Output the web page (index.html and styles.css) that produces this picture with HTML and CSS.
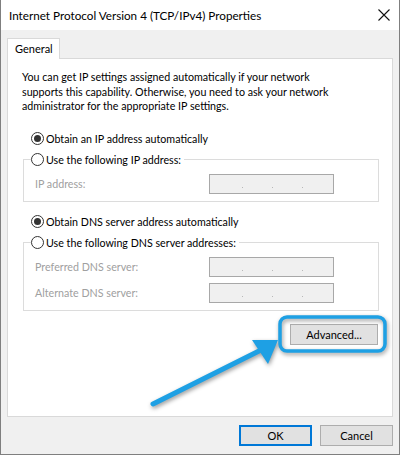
FILE: index.html
```html
<!DOCTYPE html>
<html lang="en">
<head>
  <meta charset="UTF-8">
  <title>Internet Protocol Version 4 (TCP/IPv4) Properties</title>
  <link rel="stylesheet" href="styles.css">
</head>
<body>
  <div class="window">
    <div class="titlebar">
      <span class="title">Internet Protocol Version 4 (TCP/IPv4) Properties</span>
      <svg class="close" width="12" height="12" viewBox="0 0 12 12">
        <path d="M0.5 0.5 L11.5 11.5 M11.5 0.5 L0.5 11.5" stroke="#111" stroke-width="1.1" fill="none"/>
      </svg>
    </div>

    <div class="body">
      <div class="tabs">
        <div class="tab">General</div>
      </div>

      <div class="panel">
        <p class="intro">You can get IP settings assigned automatically if your network<br>supports this capability. Otherwise, you need to ask your network<br>administrator for the appropriate IP settings.</p>

        <div class="radio-row"><span class="radio checked"></span>Obtain an IP address automatically</div>
        <fieldset class="group">
          <legend class="radio-row"><span class="radio"></span>Use the following IP address:</legend>
          <div class="field">
            <span class="field-label">IP address:</span>
            <span class="ipbox"><i></i><i></i><i></i></span>
          </div>
        </fieldset>

        <div class="radio-row dns"><span class="radio checked"></span>Obtain DNS server address automatically</div>
        <fieldset class="group">
          <legend class="radio-row"><span class="radio"></span>Use the following DNS server addresses:</legend>
          <div class="field">
            <span class="field-label">Preferred DNS server:</span>
            <span class="ipbox"><i></i><i></i><i></i></span>
          </div>
          <div class="field">
            <span class="field-label">Alternate DNS server:</span>
            <span class="ipbox"><i></i><i></i><i></i></span>
          </div>
        </fieldset>

        <div class="adv-row">
          <button class="btn adv">Advanced...</button>
        </div>
      </div>

      <div class="footer">
        <button class="btn ok">OK</button>
        <button class="btn">Cancel</button>
      </div>
    </div>

    <!-- tutorial overlay: highlight + arrow -->
    <svg class="overlay" width="400" height="455" viewBox="0 0 400 455">
      <rect x="280" y="317" width="105" height="34" rx="7" ry="7" fill="none" stroke="#1ea0e4" stroke-width="3.5"/>
      <path d="M153 404 L259 351" stroke="#1ea0e4" stroke-width="5" stroke-linecap="round" fill="none"/>
      <polygon points="252,340 278,340 268,364" fill="#1ea0e4"/>
    </svg>
  </div>
</body>
</html>
```

FILE: styles.css
```css
* {
  box-sizing: border-box;
}

body {
  margin: 0;
  font-family: Lato, "Liberation Sans", Arial, sans-serif;
  font-size: 10.7px;
  color: #000;
  background: #fff;
}

.window {
  position: relative;
  width: 400px;
  height: 455px;
  border: 1px solid #7f7f7f;
  border-top: none;
  background: #f0f0f0;
}

.titlebar {
  height: 30px;
  background: #fff;
  display: flex;
  align-items: center;
  justify-content: space-between;
  padding: 0 9px 0 8px;
}

.title {
  font-size: 11.7px;
}

.close {
  display: block;
}

.body {
  padding: 8px 6px 0 6px;
}

.tabs {
  display: flex;
  height: 20px;
  position: relative;
  z-index: 1;
}

.tab {
  width: 53px;
  height: 21px;
  background: #fff;
  border: 1px solid #d9d9d9;
  border-bottom: none;
  padding: 3px 0 0 7px;
  font-size: 11px;
}

.panel {
  height: 359px;
  background: #fff;
  border: 1px solid #d9d9d9;
  padding: 11px 0 0 0;
}

.intro {
  margin: 0 0 0 14px;
  line-height: 14.5px;
  white-space: nowrap;
}

.radio-row {
  display: flex;
  align-items: center;
  height: 16px;
  margin: 17px 0 0 23px;
  white-space: nowrap;
}

.radio-row.dns {
  margin-top: 12px;
}

.radio {
  width: 13px;
  height: 13px;
  border: 1px solid #333;
  border-radius: 50%;
  margin-right: 2px;
  background: #fff;
  display: flex;
  align-items: center;
  justify-content: center;
}

.radio.checked::after {
  content: "";
  width: 7px;
  height: 7px;
  border-radius: 50%;
  background: #333;
}

.group {
  margin: 5px 13px 0 15px;
  padding: 6px 0 7px 11px;
  border: 1px solid #dcdcdc;
  min-width: 0;
}

.group legend.radio-row {
  margin: 0 0 0 -4px;
  padding: 0 3px 0 0;
}

.field {
  display: flex;
  align-items: center;
  height: 20px;
  margin-bottom: 6px;
}

.field:last-child {
  margin-bottom: 0;
}

.field-label {
  width: 174px;
  color: #a0a0a0;
}

.ipbox {
  width: 125px;
  height: 20px;
  border: 1px solid #a8a8a8;
  background: #f0f0f0;
  display: flex;
  align-items: flex-end;
  padding: 0 0 5px 32px;
  gap: 29px;
}

.ipbox i {
  width: 1px;
  height: 1px;
  background: #b8b8b8;
}

.adv-row {
  display: flex;
  justify-content: flex-end;
  margin: 13px 14px 0 0;
}

.btn {
  font-family: inherit;
  font-size: 11px;
  height: 21px;
  width: 73px;
  padding: 0;
  background: #e1e1e1;
  border: 1px solid #adadad;
  color: #000;
}

.btn.adv {
  width: 88px;
}

.btn.ok {
  border: 2px solid #0078d7;
}

.footer {
  display: flex;
  justify-content: flex-end;
  gap: 8px;
  margin-top: 8px;
}

.overlay {
  position: absolute;
  left: -1px;
  top: 0;
  filter: drop-shadow(1px 2px 2px rgba(0, 0, 0, 0.4));
  pointer-events: none;
}
```
